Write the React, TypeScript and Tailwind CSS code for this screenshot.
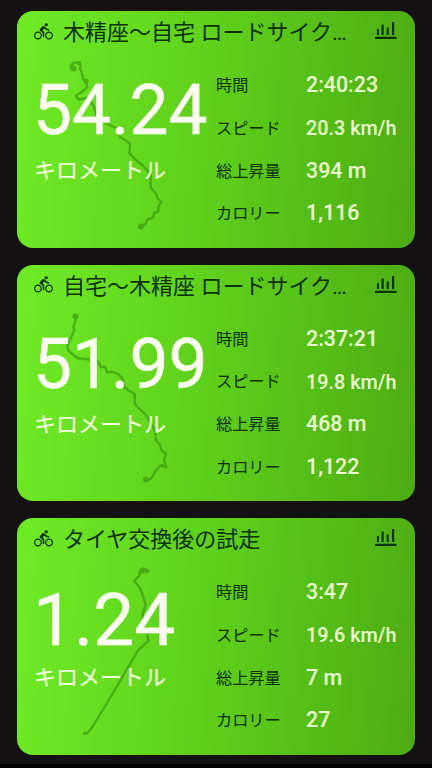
import React from "react";
import { MdDirectionsBike } from "react-icons/md";

interface Stat {
  label: string;
  value: string;
  small?: boolean;
}

interface Ride {
  title: string;
  distance: string;
  // short distances get a bit more room
  large?: boolean;
  stats: Stat[];
  track: string;
  dots: [number, number, number][];
}

const rides: Ride[] = [
  {
    title: "木精座〜自宅 ロードサイク…",
    distance: "54.24",
    stats: [
      { label: "時間", value: "2:40:23" },
      { label: "スピード", value: "20.3 km/h", small: true },
      { label: "総上昇量", value: "394 m" },
      { label: "カロリー", value: "1,116" },
    ],
    track:
      "54.7,57.8 53.7,54.5 57,51.8 62.3,51.2 63.7,54.5 63,57.8 64.7,61.2 66.3,68.5 69,71.2 70.3,75.8 67.7,78.5 63.7,81.8 59,84.5 61.3,88.5 66.3,87.8 71.3,86.5 75.7,93.5 79,101.8 80.3,110 88,112 93,114 102,118.5 103,126 108,129 113,132.5 112.3,142 118,148 126.3,155 133.7,163.5 133.7,177 138.7,182 140.3,187 144.3,191 141.3,196 141.7,200 137,202.5 136.3,206.5 130.3,208.5 129,212.5 124,216",
    dots: [
      [56.5, 57.5, 3],
      [62, 52.5, 2],
      [69, 70, 2.5],
      [124, 215.5, 3],
    ],
  },
  {
    title: "自宅〜木精座 ロードサイク…",
    distance: "51.99",
    stats: [
      { label: "時間", value: "2:37:21" },
      { label: "スピード", value: "19.8 km/h", small: true },
      { label: "総上昇量", value: "468 m" },
      { label: "カロリー", value: "1,122" },
    ],
    track:
      "58.3,51.7 58.3,56.7 56.3,61.7 57.3,65 53.7,73.3 50.3,81 51.3,85.7 56.3,90 61.3,93.3 71.3,94.3 76.3,96.7 81.3,96.7 83.7,102.3 88,101.7 90.3,107.7 94.7,106.7 101.3,109 105.7,114.3 107,121.7 112.3,125.7 117.7,129 117.7,139 123,144.3 129,150 133,156.7 138.7,166.7 138.7,175 143,180 144.7,185.7 149,189 147,195 149,202.3 144.7,200 139.7,204.3 137,209 133.7,214 129,215",
    dots: [
      [58.5, 51.5, 3],
      [129, 214.5, 3],
    ],
  },
  {
    title: "タイヤ交換後の試走",
    distance: "1.24",
    large: true,
    stats: [
      { label: "時間", value: "3:47" },
      { label: "スピード", value: "19.6 km/h", small: true },
      { label: "総上昇量", value: "7 m" },
      { label: "カロリー", value: "27" },
    ],
    track:
      "131.3,53 127,50.5 123,53 122.3,57.5 117.3,63 123,70 126.3,79 128.7,86.5 125.7,96.5 126.3,106.5 130.3,116.5 131.3,123 121.3,132 109.7,151.5 93,180 74.7,210 70.3,215 67,215.5",
    dots: [
      [125.5, 52.5, 3],
      [129.5, 53, 2.5],
      [68, 215.5, 1.8],
    ],
  },
];

const Track: React.FC<{ ride: Ride }> = ({ ride }) => (
  <svg
    className="absolute inset-0 pointer-events-none"
    width="398"
    height="237"
    fill="none"
    opacity="0.7"
  >
    <polyline
      points={ride.track}
      stroke="#3d9a0e"
      strokeWidth="2.4"
      strokeLinejoin="round"
      strokeLinecap="round"
    />
    {ride.dots.map(([x, y, r]) => (
      <circle key={`${x}-${y}`} cx={x} cy={y} r={r} fill="#3d9a0e" />
    ))}
  </svg>
);

const ChartIcon = () => (
  <svg width="22" height="20" viewBox="0 0 22 20" fill="#0a3408">
    <rect x="0" y="15.7" width="21.5" height="2.3" rx="0.5" />
    <rect x="1.9" y="8.2" width="2.1" height="5.8" />
    <rect x="6.5" y="3.6" width="2.2" height="10.4" />
    <rect x="11.6" y="6.5" width="2.2" height="7.5" />
    <rect x="17" y="1" width="2.2" height="13" />
  </svg>
);

const RideCard: React.FC<{ ride: Ride }> = ({ ride }) => (
  <section className="relative h-[236.5px] rounded-[16px] overflow-hidden bg-[linear-gradient(95deg,#6feb26_0%,#5dcd1a_52%,#4dac14_100%)]">
    <Track ride={ride} />
    <div className="relative h-full flex flex-col">
      <header className="h-[44px] flex items-center pl-[17px] pr-[18px] text-[#0a3008]">
        <MdDirectionsBike size={19} className="shrink-0 mb-[4px]" />
        <h2 className="ml-[10px] whitespace-nowrap text-[22px] leading-[44px]">
          {ride.title}
        </h2>
        <div className="ml-auto shrink-0 mb-[4px]">
          <ChartIcon />
        </div>
      </header>
      <div className="flex">
        <div className="w-[199px] pl-[17px] text-[#fcfff0]">
          <p
            className={`h-[97px] -ml-px whitespace-nowrap [-webkit-text-stroke:0.4px] ${
              ride.large
                ? "text-[73px] leading-[116px]"
                : "text-[69.5px] leading-[111px]"
            }`}
          >
            {ride.distance}
          </p>
          <p className="h-[38px] leading-[38px] text-[22px] text-[#efffd8] [-webkit-text-stroke:0.2px]">
            キロメートル
          </p>
        </div>
        <dl className="pt-[10px]">
          {ride.stats.map((stat) => (
            <div key={stat.label} className="flex items-center h-[42.7px]">
              <dt className="w-[90px] text-[16.2px] text-[#0a3008]">
                {stat.label}
              </dt>
              <dd
                className={`font-medium whitespace-nowrap text-[#ebffd0] ${
                  stat.small ? "text-[19.8px]" : "text-[21.4px] pb-[2px]"
                }`}
              >
                {stat.value}
              </dd>
            </div>
          ))}
        </dl>
      </div>
    </div>
  </section>
);

export default function App() {
  return (
    <div className="h-[768px] overflow-hidden bg-[#131111] font-[Roboto,'Noto_Sans_CJK_JP',sans-serif] flex flex-col">
      <main className="flex-1 flex flex-col gap-[17px] pt-[11px] px-[17px]">
        {rides.map((ride) => (
          <RideCard key={ride.distance} ride={ride} />
        ))}
      </main>
      <div className="h-1 shrink-0 bg-black" />
    </div>
  );
}
